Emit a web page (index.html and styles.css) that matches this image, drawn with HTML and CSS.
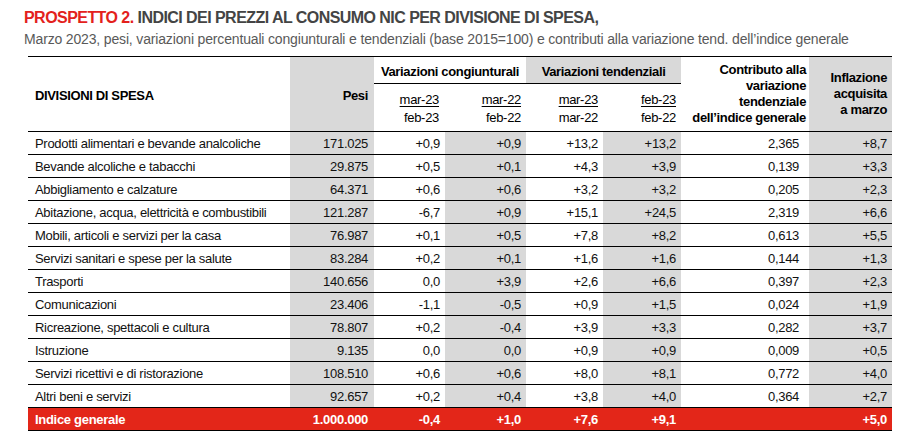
FILE: index.html
```html
<!DOCTYPE html>
<html lang="it">
<head>
<meta charset="utf-8">
<title>Prospetto 2</title>
<link rel="stylesheet" href="styles.css">
</head>
<body>
<div class="page">
  <h1 class="title"><span class="title-red">PROSPETTO 2.</span> INDICI DEI PREZZI AL CONSUMO NIC PER DIVISIONE DI SPESA,</h1>
  <p class="subtitle">Marzo 2023, pesi, variazioni percentuali congiunturali e tendenziali (base 2015=100) e contributi alla variazione tend. dell’indice generale</p>
  <table class="tbl">
    <colgroup>
      <col class="c-label"><col class="c-pesi"><col class="c-v1"><col class="c-v2"><col class="c-v3"><col class="c-v4"><col class="c-contr"><col class="c-infl">
    </colgroup>
    <thead>
      <tr class="h1">
        <th rowspan="2" class="th-label">DIVISIONI DI SPESA</th>
        <th rowspan="2" class="th-pesi grey">Pesi</th>
        <th colspan="2" class="th-group">Variazioni congiunturali</th>
        <th colspan="2" class="th-group grey">Variazioni tendenziali</th>
        <th rowspan="2" class="th-contr">Contributo alla<br>variazione<br>tendenziale<br>dell’indice generale</th>
        <th rowspan="2" class="th-infl grey">Inflazione<br>acquisita<br>a marzo</th>
      </tr>
      <tr class="h2">
        <th class="th-period p1"><u>mar-23</u><br>feb-23</th>
        <th class="th-period"><u>mar-22</u><br>feb-22</th>
        <th class="th-period"><u>mar-23</u><br>mar-22</th>
        <th class="th-period"><u>feb-23</u><br>feb-22</th>
      </tr>
    </thead>
    <tbody>
      <tr><td class="lbl">Prodotti alimentari e bevande analcoliche</td><td class="grey pesi">171.025</td><td>+0,9</td><td class="grey">+0,9</td><td>+13,2</td><td class="grey">+13,2</td><td class="contr">2,365</td><td class="grey">+8,7</td></tr>
      <tr><td class="lbl">Bevande alcoliche e tabacchi</td><td class="grey pesi">29.875</td><td>+0,5</td><td class="grey">+0,1</td><td>+4,3</td><td class="grey">+3,9</td><td class="contr">0,139</td><td class="grey">+3,3</td></tr>
      <tr><td class="lbl">Abbigliamento e calzature</td><td class="grey pesi">64.371</td><td>+0,6</td><td class="grey">+0,6</td><td>+3,2</td><td class="grey">+3,2</td><td class="contr">0,205</td><td class="grey">+2,3</td></tr>
      <tr><td class="lbl">Abitazione, acqua, elettricità e combustibili</td><td class="grey pesi">121.287</td><td>-6,7</td><td class="grey">+0,9</td><td>+15,1</td><td class="grey">+24,5</td><td class="contr">2,319</td><td class="grey">+6,6</td></tr>
      <tr><td class="lbl">Mobili, articoli e servizi per la casa</td><td class="grey pesi">76.987</td><td>+0,1</td><td class="grey">+0,5</td><td>+7,8</td><td class="grey">+8,2</td><td class="contr">0,613</td><td class="grey">+5,5</td></tr>
      <tr><td class="lbl">Servizi sanitari e spese per la salute</td><td class="grey pesi">83.284</td><td>+0,2</td><td class="grey">+0,1</td><td>+1,6</td><td class="grey">+1,6</td><td class="contr">0,144</td><td class="grey">+1,3</td></tr>
      <tr><td class="lbl">Trasporti</td><td class="grey pesi">140.656</td><td>0,0</td><td class="grey">+3,9</td><td>+2,6</td><td class="grey">+6,6</td><td class="contr">0,397</td><td class="grey">+2,3</td></tr>
      <tr><td class="lbl">Comunicazioni</td><td class="grey pesi">23.406</td><td>-1,1</td><td class="grey">-0,5</td><td>+0,9</td><td class="grey">+1,5</td><td class="contr">0,024</td><td class="grey">+1,9</td></tr>
      <tr><td class="lbl">Ricreazione, spettacoli e cultura</td><td class="grey pesi">78.807</td><td>+0,2</td><td class="grey">-0,4</td><td>+3,9</td><td class="grey">+3,3</td><td class="contr">0,282</td><td class="grey">+3,7</td></tr>
      <tr><td class="lbl">Istruzione</td><td class="grey pesi">9.135</td><td>0,0</td><td class="grey">0,0</td><td>+0,9</td><td class="grey">+0,9</td><td class="contr">0,009</td><td class="grey">+0,5</td></tr>
      <tr><td class="lbl">Servizi ricettivi e di ristorazione</td><td class="grey pesi">108.510</td><td>+0,6</td><td class="grey">+0,6</td><td>+8,0</td><td class="grey">+8,1</td><td class="contr">0,772</td><td class="grey">+4,0</td></tr>
      <tr><td class="lbl">Altri beni e servizi</td><td class="grey pesi">92.657</td><td>+0,2</td><td class="grey">+0,4</td><td>+3,8</td><td class="grey">+4,0</td><td class="contr">0,364</td><td class="grey">+2,7</td></tr>
      <tr class="total"><td class="lbl">Indice generale</td><td class="pesi">1.000.000</td><td>-0,4</td><td>+1,0</td><td>+7,6</td><td>+9,1</td><td class="contr"></td><td>+5,0</td></tr>
    </tbody>
  </table>
</div>
</body>
</html>
```
FILE: styles.css
```css
html, body {
  margin: 0;
  padding: 0;
  background: #ffffff;
}
.page {
  padding: 7px 0 0 24px;
  font-family: "Liberation Sans", Arial, sans-serif;
  color: #111111;
}
.title {
  margin: 0;
  font-size: 16px;
  line-height: 21px;
  letter-spacing: -0.55px;
  font-weight: bold;
  color: #444444;
  white-space: nowrap;
}
.title-red {
  color: #e3211c;
}
.subtitle {
  margin: 2px 0 0;
  font-size: 14px;
  line-height: 18px;
  letter-spacing: -0.16px;
  color: #595959;
  white-space: nowrap;
}
.tbl {
  margin: 8px 0 0 4px;
  border-collapse: collapse;
  table-layout: fixed;
  width: 864px;
  font-size: 13px;
  letter-spacing: -0.3px;
}
.c-label { width: 262px; }
.c-pesi { width: 84px; }
.c-v1 { width: 71px; }
.c-v2 { width: 81px; }
.c-v3 { width: 77px; }
.c-v4 { width: 78px; }
.c-contr { width: 128px; }
.c-infl { width: 83px; }

.tbl thead {
  border-top: 1px solid #000;
  border-bottom: 1px solid #000;
}
.tbl th {
  font-weight: bold;
  color: #000;
  padding: 0 5px;
  line-height: 16px;
  letter-spacing: -0.35px;
  text-align: right;
  vertical-align: middle;
  white-space: nowrap;
}
.grey {
  background: #d9d9d9;
}
.h1 {
  height: 27px;
}
.h2 {
  height: 48px;
}
.th-label {
  text-align: left !important;
  padding: 4px 0 0 7px !important;
}
.th-pesi {
  padding: 4px 6px 0 0 !important;
}
.th-group {
  text-align: center !important;
  border-bottom: 1px solid #000;
  padding: 3px 0 0 !important;
}
.th-period {
  font-weight: normal !important;
  line-height: 18px !important;
  padding-top: 3px !important;
  letter-spacing: -0.3px !important;
}
.th-period u {
  text-underline-offset: 2px;
}
.p1 {
  padding-right: 6px !important;
}
.th-contr {
  padding: 0 3px 0 0 !important;
}
.tbl td {
  height: 22px;
  padding: 0 5px;
  text-align: right;
  vertical-align: middle;
  border-bottom: 1px solid #000;
  white-space: nowrap;
}
.tbl td.lbl {
  text-align: left;
  padding-left: 7px;
}
.tbl td.pesi {
  padding-right: 6px;
}
.tbl td.contr {
  padding-right: 10px;
}
.total td {
  background: #e32619;
  color: #ffffff;
  font-weight: bold;
}
```
